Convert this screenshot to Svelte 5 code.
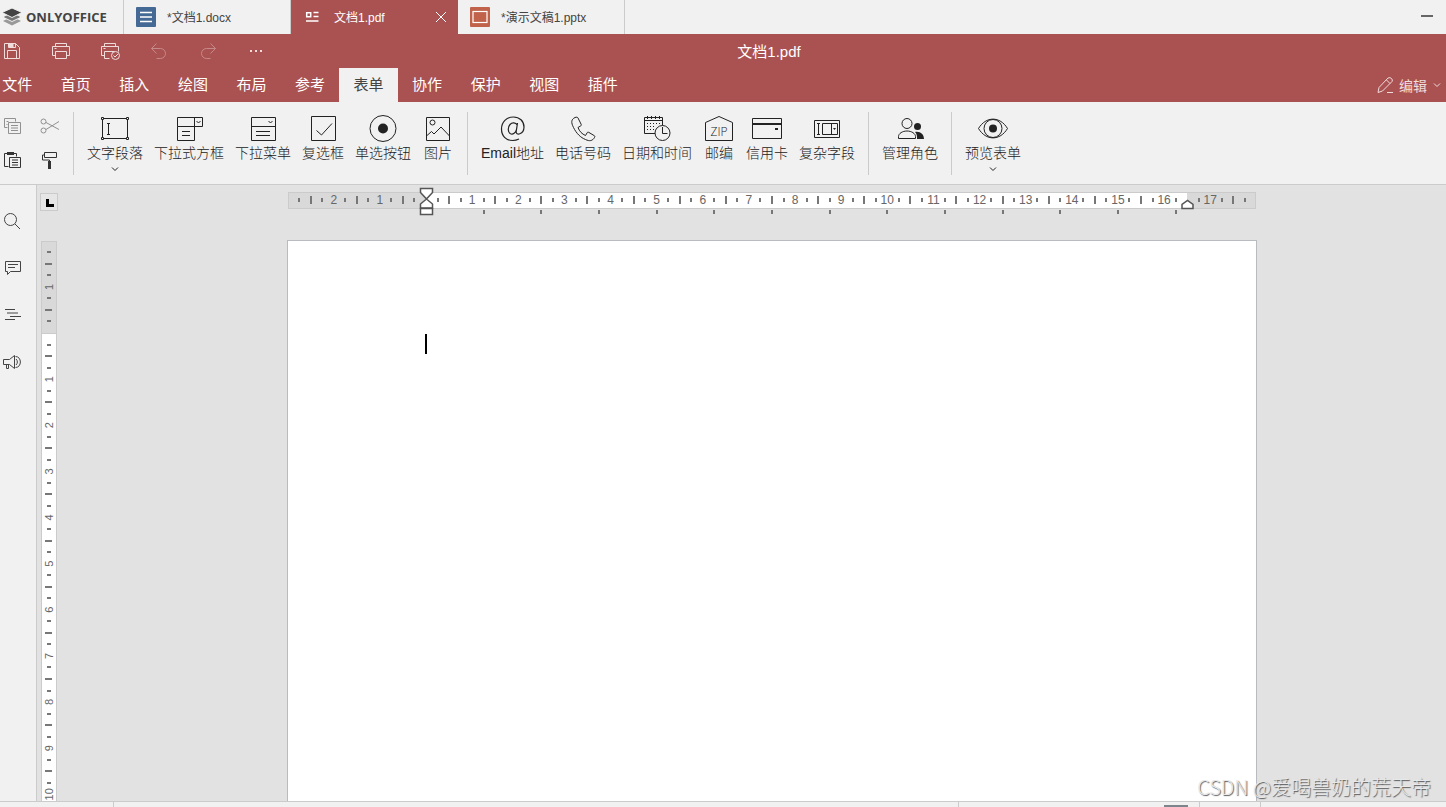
<script>
    const quickActions = [
        { label: "保存", icon: "save" },
        { label: "打印", icon: "print" },
        { label: "快速打印", icon: "quickPrint" },
        { label: "撤销", icon: "undo", disabled: true },
        { label: "重做", icon: "redo", disabled: true },
        { label: "更多", icon: "more" },
    ];

    const menu = ["文件", "首页", "插入", "绘图", "布局", "参考", "表单", "协作", "保护", "视图", "插件"];
    let activeMenu = $state("表单");

    const groups = [
        [
            { label: "文字段落", icon: "textField", arrow: true },
            { label: "下拉式方框", icon: "combo" },
            { label: "下拉菜单", icon: "dropdown" },
            { label: "复选框", icon: "checkbox" },
            { label: "单选按钮", icon: "radio" },
            { label: "图片", icon: "image" },
        ],
        [
            { label: "Email地址", icon: "email" },
            { label: "电话号码", icon: "phone" },
            { label: "日期和时间", icon: "date" },
            { label: "邮编", icon: "zip" },
            { label: "信用卡", icon: "card" },
            { label: "复杂字段", icon: "complex" },
        ],
        [{ label: "管理角色", icon: "roles" }],
        [{ label: "预览表单", icon: "preview", arrow: true }],
    ];

    const sideItems = [
        { label: "搜索", icon: "search" },
        { label: "批注", icon: "comment" },
        { label: "标题", icon: "headings" },
        { label: "反馈", icon: "feedback" },
    ];

    // 20x20 icons
    const small = {
        save: '<path d="M2.5 2.5h11l4 4v11h-15zM5.5 17.5v-8h9v8M6.5 2.5v4h7v-4"/><path d="M7 3h4v3h-4z" fill="currentColor"/>',
        print: '<path d="M4.5 5.5v-3h11v3M4.5 14.5h-3v-9h17v9h-3M4.5 10.5h11v7h-11zM3.5 7.5h2"/>',
        quickPrint: '<path d="M4.5 5.5v-3h11v3M4.5 14.5h-3v-9h17v5M9.5 17.5h-5v-7h10M3.5 7.5h2"/><circle cx="15.5" cy="14.5" r="4"/><path d="M13.5 14.5l1.5 1.5 3-3"/>',
        undo: '<path d="M7.5 2.5l-5 5 5 5M2.5 7.5h9a5 5 0 0 1 0 10h-4"/>',
        redo: '<path d="M12.5 2.5l5 5-5 5M17.5 7.5h-9a5 5 0 0 0 0 10h4"/>',
        more: '<path d="M3 9h2v2h-2zM8 9h2v2h-2zM13 9h2v2h-2z" fill="currentColor" stroke="none"/>',
        copy: '<path d="M5.5 11.5h-3v-9h11v3M4.5 5.5h2M4.5 8.5h1"/><path d="M6.5 6.5h12v11h-12zM9 9.5h7M9 12h7M9 14.5h7"/>',
        cut: '<circle cx="3.5" cy="5.5" r="2.5"/><circle cx="3.5" cy="14.5" r="2.5"/><path d="M6 6.5l13 7M6 13.5l13-8"/>',
        paste: '<path d="M6.5 16.5h-4v-13h12v3"/><path d="M5 2h7v3h-7z" fill="currentColor" stroke="none"/><path d="M7.5 7.5h11v10h-11zM10 10h6M10 12.5h6M10 15h6"/>',
        brush: '<path d="M4.5 2.5h12v5h-12zM4.5 5h-2v5h7v2"/><path d="M8 11h3v8h-3z" fill="currentColor" stroke="none"/>',
        search: '<circle cx="8.5" cy="8.5" r="6"/><path d="M13 13l5 5"/>',
        comment: '<path d="M3.5 3.5h15v10h-10l-3 3v-3h-2zM6 6.5h10M6 9.5h7"/>',
        headings: '<path d="M3 4.5h10M5 8h11M8 11.5h11M3 14.5h10"/>',
        feedback: '<path d="M1.5 7.5h6l5-4v13l-5-4h-6zM4.5 12.5v4h2v-4M14 7a4 4 0 0 1 0 6M13.500 4.500c6.500 0 6.500 11 0 11"/>',
        edit: '<path d="M3 17.5l1-5 9-9.5q2-1 3.5.5t.5 3l-9.5 9.5zM11.5 5l3.5 3.500M12 17.500h6"/>',
    };

    // 32x28 icons
    const large = {
        textField: '<path d="M3.5 3.5h25v20h-25z"/><path d="M2.5 2.500h2v2h-2zM27.500 2.500h2v2h-2zM2.500 22.500h2v2h-2zM27.500 22.500h2v2h-2z" fill="#f1f1f1"/><path d="M9.500 9v10M8 8.500h3M8 19.500h3"/>',
        combo: '<path d="M4.5 2.5h25v9h-25zM21.5 2.5v23h-17v-14M9 16.5h8M9 20.5h8M23.5 6l2 2 2-2"/>',
        dropdown: '<path d="M4.5 2.5h24v23h-24zM4.5 11.5h24M9 16.5h14M9 20.5h14M21.5 6l2 2 2-2"/>',
        checkbox: '<path d="M4.5 1.5h24v24h-24zM9.5 15.5l5 4.5 10.5-11.5"/>',
        radio: '<circle cx="16" cy="13.5" r="13"/><circle cx="16" cy="13.5" r="5" fill="currentColor" stroke="none"/>',
        image: '<path d="M4.5 2.5h23v23h-23zM5 20.5l4.5-4 2.5 2.5 7-7 8.5 9"/><circle cx="10.5" cy="7.5" r="2.5"/>',
        email: '<path d="M20.500 8l-1.300 8.500c-.7 4.500 7.800 3 7.800-4.500C27 6 22.500 2 16.500 2 9.500 2 4.500 7 4.500 14c0 7 4.500 11.500 11 11.500 2.500 0 4.500-.5 6.500-1.500M20.200 10c-1.500-2.500-5-3-7.200-.5-2.300 2.500-2.500 8 .5 9.300 2.500 1 5.200-1 5.900-4" stroke-width="1.200"/>',
        phone: '<path d="M8 2.5c-4 2-4 5-1.5 10 3 6 7 10 12 12 4 2 7 1.5 9-2 .5-1 .5-1.5-.5-2l-5-3c-1-.5-1.5-.5-2 .5l-1.5 2.5c-3.5-1.5-6-4-7.5-8l2.5-1.5c1-.5 1-1 .5-2l-3-6c-.5-1-1.500-1-3-.500z"/>',
        date: '<path d="M14 18.5h-10.500v-16h18v8M3.5 5.5h18M6.5 1v3M10.5 1v3M14.5 1v3M18.5 1v3"/><path d="M6 8.5h14M6 11.5h9M6 14.5h8" stroke-dasharray="1 2"/><circle cx="21.5" cy="18" r="7.5"/><path d="M21.5 12v6.5h5"/>',
        zip: '<path d="M2.5 7.5l13.5-6 13.5 6v18h-27z"/><text x="16" y="21" text-anchor="middle" font-family="Open Sans" font-weight="300" font-size="12" fill="currentColor" stroke="none">ZIP</text>',
        card: '<path d="M1.5 3.5h29v20h-29z"/><path d="M2 8h28v2h-28zM24 13h3v2h-3z" fill="currentColor" stroke="none"/>',
        complex: '<path d="M3.5 5.5h25v17h-25zM11.5 8.5h15v11h-15zM20.5 8.5v11M7.5 9v10M6 8.5h3M6 19.5h3"/><path d="M22 13h3l-1.5 2z" fill="currentColor" stroke="none"/>',
        roles: '<circle cx="13" cy="8.5" r="5"/><path d="M4.5 23.5v-2c0-3 4-5.5 8.5-5.5s8.5 2.5 8.5 5.5v2z"/><circle cx="23.5" cy="11.5" r="3.5" fill="currentColor" stroke="none"/><path d="M21 17c5-1 9 2 9 7h-7c0-3 0-5-2-7z" fill="currentColor" stroke="none"/>',
        preview: '<path d="M1.5 13.5C9 1 23 1 30.5 13.5 23 26 9 26 1.5 13.5z"/><circle cx="16" cy="13.5" r="9"/><circle cx="16" cy="13.5" r="4" fill="currentColor" stroke="none"/>',
    };

    const CM = 46.13;
    let windowHeight = $state(800);

    function ticks(from, to) {
        const list = [];
        for (let k = from; k <= to; k++) {
            if (k === 0) continue;
            list.push({
                pos: (k * CM) / 4,
                number: k % 4 === 0 ? Math.abs(k / 4) : null,
                half: k % 2 === 0,
            });
        }
        return list;
    }

    // the tick under the right indent marker is left out
    const hTicks = ticks(-11, 71).filter((t) => t.pos < 755 || t.pos > 765);
    const tabStops = Array.from({ length: 13 }, (_, i) => (i + 1) * CM * 1.25);

    // the vertical ruler runs down to the status bar
    const vTicks = $derived(ticks(-7, Math.floor((windowHeight - 340) / (CM / 4))));
</script>

<svelte:window bind:innerHeight={windowHeight} />

{#snippet smallIcon(name)}
    <svg width="20" height="20" viewBox="0 0 20 20" fill="none" stroke="currentColor" aria-hidden="true">
        {@html small[name]}
    </svg>
{/snippet}

{#snippet chevron()}
    <svg width="8" height="8" viewBox="0 0 8 8" fill="none" stroke="currentColor" aria-hidden="true">
        <path d="M1 2.500l3 3 3-3" />
    </svg>
{/snippet}

<div class="app">
    <div class="tabs">
        <a class="brand" href="#home">
            <svg width="20" height="18" viewBox="0 0 20 18" aria-hidden="true">
                <path d="M10 8.500l9 4.500-9 4.500-9-4.500z" fill="#999" />
                <path d="M10 4.500l9.500 4.500-9.500 4.500-9.500-4.500z" fill="#777" stroke="#f1f1f1" />
                <path d="M10 0l10 4.500-10 5-10-5z" fill="#444" stroke="#f1f1f1" />
            </svg>
            ONLYOFFICE
        </a>
        <button class="tab">
            <svg width="20" height="20" viewBox="0 0 20 20" aria-hidden="true">
                <rect width="20" height="20" rx="1" fill="#446995" />
                <path d="M4 5.500h12M4 10h12M4 14.500h12" stroke="#fff" stroke-width="1.500" />
            </svg>
            <span>*文档1.docx</span>
        </button>
        <div class="tab current">
            <svg width="20" height="20" viewBox="0 0 20 20" fill="none" stroke="#fff" aria-hidden="true">
                <path d="M3.700 5.700h4v4h-4z" stroke-width="1.500" />
                <path d="M10.500 5.500h5M10.500 9.500h5M3 14h12.500" stroke-width="1.500" />
            </svg>
            <span>文档1.pdf</span>
            <button class="close" aria-label="关闭">
                <svg width="12" height="12" viewBox="0 0 12 12" stroke="currentColor" aria-hidden="true">
                    <path d="M1 1l10 10M11 1l-10 10" />
                </svg>
            </button>
        </div>
        <button class="tab">
            <svg width="20" height="20" viewBox="0 0 20 20" aria-hidden="true">
                <rect width="20" height="20" rx="1" fill="#c0634a" />
                <rect x="3" y="4.500" width="14" height="11" fill="none" stroke="#fff" stroke-width="1.200" />
            </svg>
            <span>*演示文稿1.pptx</span>
        </button>
        <button class="minimize" aria-label="最小化"></button>
    </div>

    <header>
        <div class="title-row">
            <div class="quick">
                {#each quickActions as action}
                    <button aria-label={action.label} disabled={action.disabled}>{@render smallIcon(action.icon)}</button>
                {/each}
            </div>
            <div class="title">文档1.pdf</div>
        </div>
        <div class="menu-row">
            <nav>
                {#each menu as item}
                    <button class:active={item === activeMenu} onclick={() => (activeMenu = item)}>{item}</button>
                {/each}
            </nav>
            <button class="mode">
                {@render smallIcon("edit")}
                <span>编辑</span>
                {@render chevron()}
            </button>
        </div>
    </header>

    <div class="ribbon">
        <div class="clipboard">
            <button aria-label="复制" disabled>{@render smallIcon("copy")}</button>
            <button aria-label="剪切" disabled>{@render smallIcon("cut")}</button>
            <button aria-label="粘贴">{@render smallIcon("paste")}</button>
            <button aria-label="复制样式">{@render smallIcon("brush")}</button>
        </div>
        {#each groups as group}
            <div class="group">
                {#each group as item}
                    <button>
                        <svg width="32" height="28" viewBox="0 0 32 28" fill="none" stroke="currentColor" aria-hidden="true">
                            {@html large[item.icon]}
                        </svg>
                        <span>{item.label}</span>
                        {#if item.arrow}{@render chevron()}{/if}
                    </button>
                {/each}
            </div>
        {/each}
    </div>

    <main>
        <aside>
            {#each sideItems as item}
                <button aria-label={item.label}>{@render smallIcon(item.icon)}</button>
            {/each}
        </aside>

        <div class="workspace">
            <div class="corner">
                <button aria-label="制表符">
                    <svg width="8" height="8" viewBox="0 0 8 8" aria-hidden="true">
                        <path d="M0 0h3v5h5v3h-8z" />
                    </svg>
                </button>
            </div>

            <svg class="ruler horizontal" width="970" height="30" aria-hidden="true">
                <rect x="1.500" y="5.500" width="967" height="16" fill="#d9d9d9" stroke="#cbcbcb" />
                <rect x="139" y="6" width="761" height="15" fill="#fff" />
                {#each hTicks as t}
                    {#if t.number}
                        <text x={139 + t.pos} y="17" text-anchor="middle">{t.number}</text>
                    {:else}
                        <rect x={Math.round(138 + t.pos)} y={t.half ? 9 : 11} width="2" height={t.half ? 8 : 4} fill="#777" />
                    {/if}
                {/each}
                {#each tabStops as stop}
                    <rect x={Math.round(138 + stop)} y="23" width="2" height="4" fill="#777" />
                {/each}
                <g fill="#fff" stroke="#555" stroke-width="1.500">
                    <path d="M133.500 1.500h12v4l-6 6.500 6 5v4h-12v-4l6-5-6-6.500z" />
                    <path d="M133.500 21.500h12v6h-12z" />
                    <path d="M895 21.500v-4l5.500-4 5.500 4v4z" />
                </g>
            </svg>

            <div class="gutter">
                <svg class="ruler vertical" width="16" height="100%" aria-hidden="true">
                    <rect x="0.500" y="0.500" width="15" height="100%" fill="#fff" stroke="#cbcbcb" />
                    <rect x="0.500" y="0.500" width="15" height="92" fill="#d9d9d9" stroke="#cbcbcb" />
                    {#each vTicks as t}
                        {#if t.number}
                            <text transform="translate(12 {92 + t.pos}) rotate(-90)" text-anchor="middle">{t.number}</text>
                        {:else}
                            <rect x={t.half ? 4 : 6} y={Math.round(91 + t.pos)} width={t.half ? 7 : 4} height="2" fill="#777" />
                        {/if}
                    {/each}
                </svg>
            </div>

            <div class="page">
                <div class="caret"></div>
            </div>
        </div>
        <div class="watermark">CSDN @爱喝兽奶的荒天帝</div>
    </main>

    <footer>
        <div class="pages"></div>
        <div class="info"></div>
        <div class="tools"><span></span></div>
        <div class="fit"></div>
        <div class="zoom"></div>
    </footer>
</div>

<style>
    :global(body) {
        margin: 0;
    }

    .app {
        display: flex;
        flex-direction: column;
        height: 100vh;
        overflow: hidden;
        background: #f1f1f1;
        color: #444;
        font-family: "Liberation Sans", "Noto Sans CJK SC", sans-serif;
        font-size: 14px;
    }

    button {
        display: flex;
        align-items: center;
        justify-content: center;
        padding: 0;
        border: 0;
        background: none;
        color: inherit;
        font: inherit;
        white-space: nowrap;
    }

    svg {
        display: block;
        flex: none;
    }

    .tabs {
        display: flex;
        flex: none;
        height: 34px;
    }

    .brand {
        display: flex;
        align-items: center;
        gap: 4px;
        box-sizing: border-box;
        width: 124px;
        padding-left: 2px;
        border-right: 1px solid #cbcbcb;
        color: #444;
        font-family: "Open Sans", sans-serif;
        font-size: 13px;
        font-weight: 700;
        text-decoration: none;
    }

    .tab {
        display: flex;
        align-items: center;
        justify-content: flex-start;
        gap: 11px;
        box-sizing: border-box;
        width: 167px;
        padding: 0 10px 1px 12px;
        border-right: 1px solid #cbcbcb;
        font-size: 12px;
    }

    .tab span {
        padding-bottom: 1px;
    }

    .current {
        background: #aa5252;
        color: #fff;
        border-right-color: #aa5252;
    }

    .close {
        margin-left: auto;
    }

    .minimize {
        width: 12px;
        height: 2px;
        margin: 15px 13px 0 auto;
        background: #666;
    }

    header {
        flex: none;
        background: #aa5252;
        color: #fff;
    }

    .title-row,
    .menu-row {
        display: flex;
        align-items: center;
        height: 34px;
    }

    .quick {
        display: flex;
        gap: 29px;
        padding-left: 2px;
        color: #f1dcdc;
    }

    .quick button:disabled {
        opacity: 0.4;
    }

    .title {
        flex: 1;
        padding-bottom: 2px;
        margin-right: 175px;
        font-size: 15px;
        text-align: center;
    }

    nav {
        display: grid;
        grid-template-columns: repeat(11, 1fr);
        width: 644px;
        height: 34px;
        margin-left: -12px;
        font-size: 15px;
    }

    nav button {
        padding-bottom: 4px;
    }

    nav .active {
        background: #f1f1f1;
        color: #444;
    }

    .mode {
        gap: 4px;
        margin-right: 5px;
        margin-left: auto;
        color: #f1dcdc;
    }

    .mode span {
        margin-right: 2px;
    }

    .ribbon {
        display: flex;
        flex: none;
        height: 82px;
        border-bottom: 1px solid #cbcbcb;
    }

    .clipboard {
        display: grid;
        grid-template-columns: 20px 20px;
        grid-auto-rows: 20px;
        gap: 14px 18px;
        padding: 14px 13px 0 2px;
        color: #333;
    }

    .clipboard button:disabled {
        opacity: 0.5;
    }

    .group {
        display: flex;
        align-items: flex-start;
        gap: 11px;
        height: 63px;
        margin-top: 10px;
        padding: 0 13px;
        border-left: 1px solid #cbcbcb;
    }

    .group button {
        flex-direction: column;
        padding-top: 3px;
        color: #222;
        font-weight: 300;
    }

    .group span {
        line-height: 20px;
    }

    .group span + svg {
        margin-top: 2px;
    }

    main {
        position: relative;
        display: flex;
        flex: 1;
        min-height: 0;
        background: #e2e2e2;
    }

    aside {
        display: flex;
        flex-direction: column;
        align-items: flex-start;
        gap: 27px;
        box-sizing: border-box;
        width: 37px;
        padding: 26px 0 0 2px;
        border-right: 1px solid #cbcbcb;
        background: #f1f1f1;
    }

    .workspace {
        display: grid;
        grid-template-columns: 250px 970px;
        grid-template-rows: 55px 1fr;
        flex: 1;
        overflow: hidden;
    }

    .corner {
        padding: 8px 3px;
    }

    .corner button {
        width: 18px;
        height: 18px;
        padding: 2px 0 0 2px;
        border: 1px solid #cbcbcb;
        background: #e6e6e6;
    }

    .ruler text {
        fill: #666;
        font-size: 12px;
    }

    .horizontal {
        margin-top: 2px;
    }

    .gutter {
        min-height: 0;
        padding: 1px 0 0 4px;
        overflow: hidden;
    }

    .vertical text {
        font-size: 11px;
    }

    .page {
        box-sizing: border-box;
        padding: 93px 137px 0;
        border: solid #b8bcc1;
        border-width: 1px 1px 0;
        background: #fff;
    }

    .caret {
        width: 2px;
        height: 20px;
        background: #000;
    }

    .watermark {
        position: absolute;
        right: 15px;
        bottom: 0;
        color: #e8e8e8;
        font-family: "Noto Sans CJK SC", sans-serif;
        font-size: 20px;
        font-weight: 300;
        line-height: 28px;
        text-shadow: 1px 1px 1px #555;
    }

    footer {
        display: flex;
        flex: none;
        height: 5px;
        border-top: 1px solid #cbcbcb;
    }

    footer div {
        border-right: 1px solid #cbcbcb;
    }

    .pages {
        width: 113px;
    }

    .info {
        flex: 1;
    }

    .tools {
        width: 240px;
    }

    .tools span {
        display: block;
        width: 24px;
        height: 2px;
        margin: 3px 11px 0 auto;
        background: #7d858c;
    }

    .fit {
        width: 60px;
    }

    footer .zoom {
        width: 185px;
        border: 0;
    }
</style>
